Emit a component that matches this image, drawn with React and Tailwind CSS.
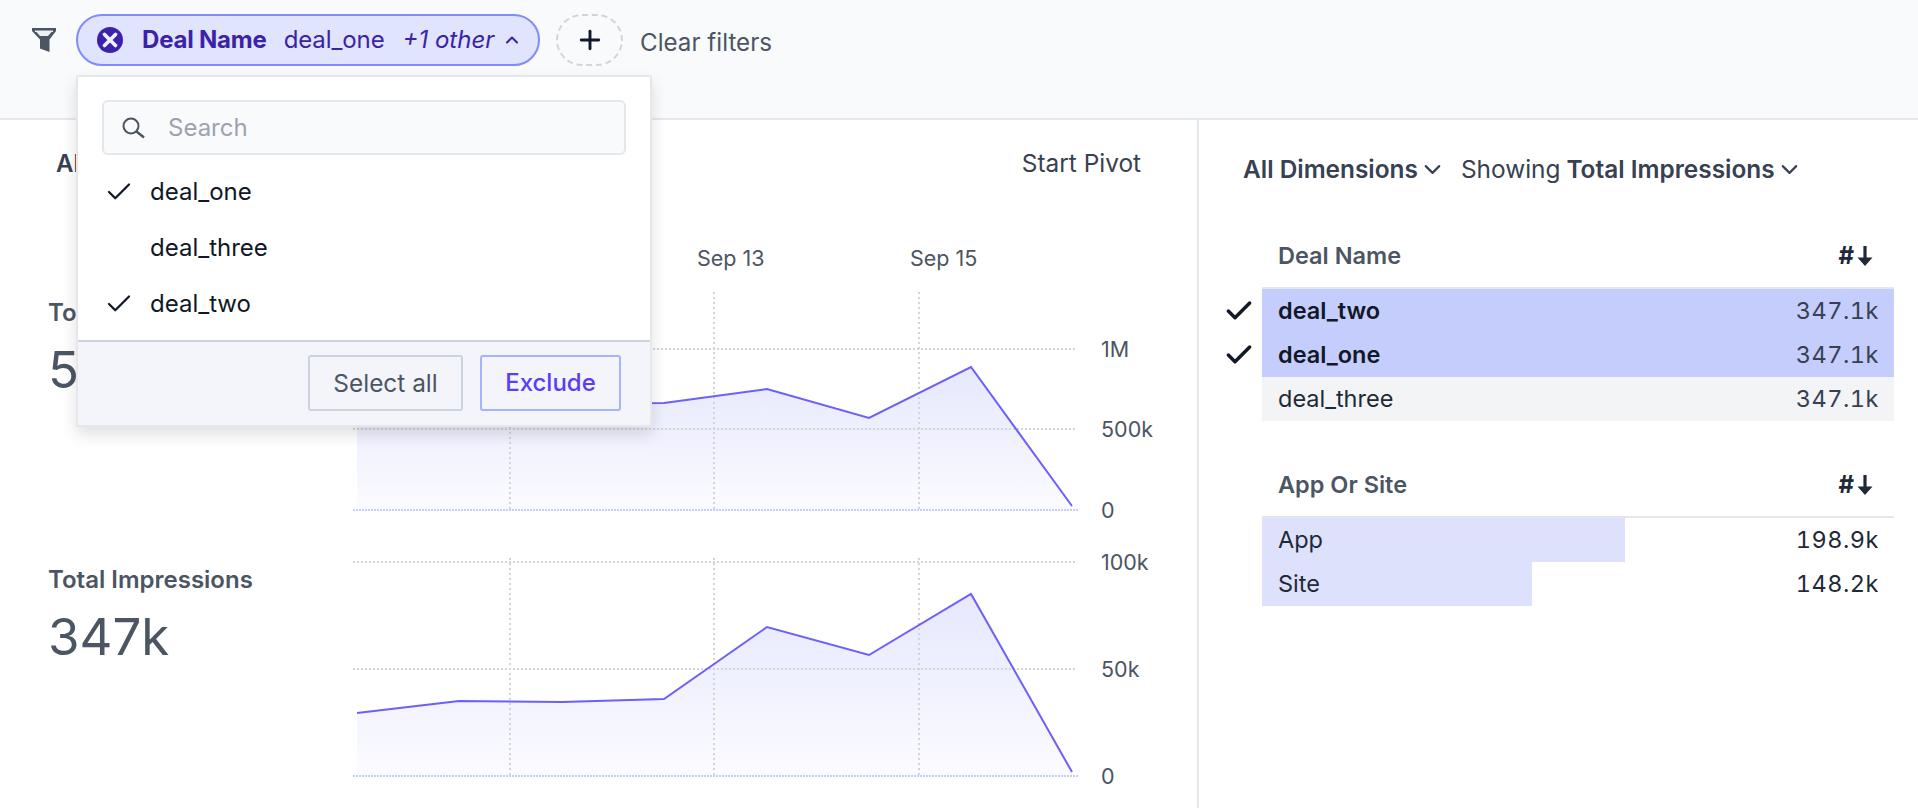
import React from 'react';
import { Check, ChevronDown, ChevronUp, Plus, X } from 'lucide-react';

const xs = [357, 459, 562, 664, 767, 869, 971, 1072];

const charts = [
  {
    label: 'Total Requests',
    value: '552k',
    top: 207,
    height: 320,
    ys: [410, 404, 404, 403, 389, 418, 367, 506],
    gridTop: 292,
    lines: [349, 429],
    base: 510,
    ticks: [['1M', 349], ['500k', 429], ['0', 510]],
    dates: true,
  },
  {
    label: 'Total Impressions',
    value: '347k',
    top: 527,
    height: 270,
    ys: [713, 701, 702, 699, 627, 655, 594, 772],
    gridTop: 558,
    lines: [562, 669],
    base: 776,
    ticks: [['100k', 562], ['50k', 669], ['0', 776]],
  },
];

const dealRows = [
  { name: 'deal_two', value: '347.1k', selected: true },
  { name: 'deal_one', value: '347.1k', selected: true },
  { name: 'deal_three', value: '347.1k' },
];

const appRows = [
  { name: 'App', value: '198.9k', width: 363 },
  { name: 'Site', value: '148.2k', width: 270 },
];

const FunnelIcon = () => (
  <svg width="24" height="24" viewBox="0 0 24 24" className="shrink-0">
    <path d="M0 0H24V3L17.5 11.5V24L8 20.5V11.5L0 3Z" fill="#4b5563" />
    <path d="M3 2.5H21V4H19.5L16 8H8L4.5 4H3Z" fill="#eef0f4" />
  </svg>
);

const SearchIcon = () => (
  <svg width="24" height="24" viewBox="0 0 24 24" className="shrink-0" fill="none" stroke="#4b5563" strokeWidth="2">
    <circle cx="9" cy="10" r="7.5" />
    <path d="M14.5 15.5L22 21.5" strokeWidth="2.4" />
  </svg>
);

const SortArrow = () => (
  <svg width="16" height="22" viewBox="0 0 16 22">
    <path d="M8 1V14" stroke="#1f2937" strokeWidth="3.2" />
    <path d="M0.5 12.5H15.5L8 21Z" fill="#1f2937" />
  </svg>
);

const Chart = ({ chart }) => {
  const line = chart.ys.map((y, i) => `${xs[i]},${y}`).join(' ');
  const id = `fill-${chart.top}`;
  return (
    <div className="flex" style={{ height: chart.height }}>
      <div className={`w-[353px] shrink-0 pl-[48px] ${chart.dates ? 'pt-[92px]' : 'pt-[39px]'}`}>
        <div className="text-[24px] leading-[28px] font-semibold text-[#4b5563]">{chart.label}</div>
        <div className="mt-[13px] text-[51px] leading-[60px] text-[#4b5563]">{chart.value}</div>
      </div>
      <svg width="844" height={chart.height} viewBox={`353 ${chart.top} 844 ${chart.height}`} className="block">
        <defs>
          <linearGradient id={id} x1="0" y1="0" x2="0" y2="1">
            <stop offset="0" stopColor="#e6e8fd" />
            <stop offset="1" stopColor="#fbfbff" />
          </linearGradient>
        </defs>
        <polygon points={`357,${chart.base} ${line} 1072,${chart.base}`} fill={`url(#${id})`} />
        {[510, 714, 919].map(x => (
          <line key={x} x1={x} x2={x} y1={chart.gridTop} y2={chart.base} stroke="#d1d5db" strokeWidth="2" strokeDasharray="2 3" />
        ))}
        {chart.lines.map(y => (
          <line key={y} x1="353" x2="1076" y1={y} y2={y} stroke="#d1d5db" strokeWidth="2" strokeDasharray="2 2" />
        ))}
        <line x1="353" x2="1078" y1={chart.base} y2={chart.base} stroke="#c7cdfa" strokeWidth="2" strokeDasharray="2 1" />
        <polyline points={line} fill="none" stroke="#6c5ffb" strokeWidth="2" />
        {chart.ticks.map(([t, y]) => (
          <text key={t} x="1101" y={y + 8} fontSize="21.5" fill="#4b5563">{t}</text>
        ))}
        {chart.dates && (
          <>
            <text x="697" y="266" fontSize="21.5" fill="#4b5563">Sep 13</text>
            <text x="910" y="266" fontSize="21.5" fill="#4b5563">Sep 15</text>
          </>
        )}
      </svg>
    </div>
  );
};

const LeaderTable = ({ title, children, className }) => (
  <div className={className}>
    <div className="ml-[63px] mr-[24px] flex h-[64px] items-center justify-between pl-[16px] pr-[21px] border-b-2 border-[#e5e7f0]">
      <span className="text-[23.5px] font-semibold text-[#4b5563]">{title}</span>
      <span className="flex items-center gap-[3px] text-[24px] font-bold text-[#1f2937]">
        #<SortArrow />
      </span>
    </div>
    {children}
  </div>
);

export default function App() {
  return (
    <div className="relative h-[808px] w-[1918px] overflow-hidden bg-white font-['Inter',sans-serif]">
      {/* filter bar */}
      <div className="flex h-[120px] items-start border-b-2 border-[#e5e7eb] bg-[#f9fafb] pl-[32px] pt-[14px]">
        <div className="mr-[20px] flex h-[52px] w-[24px] items-center">
          <FunnelIcon />
        </div>
        <div className="flex h-[52px] w-[464px] items-center rounded-full border-2 border-[#818cf8] bg-[#e0e4fd] pl-[19px] text-[24px] text-[#3b22a8]">
          <span className="flex h-[26px] w-[26px] items-center justify-center rounded-full bg-[#3b22a8]">
            <X size={22} strokeWidth={4} className="text-[#eef0ff]" />
          </span>
          <span className="ml-[19px] font-bold tracking-[-0.2px]">Deal Name</span>
          <span className="ml-[17px] tracking-[-0.1px]">deal_one</span>
          <span className="ml-[18px] italic">+1 other</span>
          <ChevronUp size={20} strokeWidth={2.5} className="ml-[8px]" />
        </div>
        <div className="ml-[16px] flex h-[52px] w-[67px] items-center justify-center rounded-full border-2 border-dashed border-[#d1d5db]">
          <Plus size={30} strokeWidth={2.3} className="text-[#111827]" />
        </div>
        <span className="ml-[17px] leading-[58px] text-[24.2px] text-[#4b5563]">Clear filters</span>
      </div>

      <div className="flex">
        {/* charts */}
        <div className="w-[1197px] shrink-0">
          <div className="flex h-[87px] items-center justify-between pl-[56px] pr-[56px]">
            <span className="text-[24px] font-semibold text-[#374151]">All Measures</span>
            <span className="text-[24.4px] text-[#374151]">Start Pivot</span>
          </div>
          {charts.map(c => (
            <Chart key={c.label} chart={c} />
          ))}
        </div>

        {/* dimensions */}
        <div className="min-h-[688px] flex-1 border-l-2 border-[#e5e7eb]">
          <div className="flex h-[98px] items-center pl-[44px] text-[24.4px] text-[#374151]">
            <span className="font-semibold">All Dimensions</span>
            <ChevronDown size={27} strokeWidth={1.9} className="ml-[1px]" />
            <span className="ml-[15px]">Showing</span>
            <span className="ml-[6px] font-semibold">Total Impressions</span>
            <ChevronDown size={27} strokeWidth={1.9} className="ml-[1px]" />
          </div>
          <LeaderTable title="Deal Name" className="mt-[7px]">
            {dealRows.map(r => (
              <div key={r.name} className="flex h-[44px] items-center">
                <div className="flex w-[63px] justify-end pr-[7px]">
                  {r.selected && <Check size={32} strokeWidth={2.6} className="text-[#111827]" />}
                </div>
                <div className={`mr-[24px] flex h-full flex-1 items-center justify-between pl-[16px] pr-[15px] text-[23.5px] ${r.selected ? 'bg-[#c4cdfc] font-semibold text-[#111827]' : 'bg-[#f3f4f6] text-[#1f2937]'}`}>
                  <span>{r.name}</span>
                  <span className="font-normal tabular-nums tracking-[0.5px] text-[#374151]">{r.value}</span>
                </div>
              </div>
            ))}
          </LeaderTable>
          <LeaderTable title="App Or Site" className="mt-[33px]">
            {appRows.map(r => (
              <div key={r.name} className="ml-[63px] mr-[24px] flex h-[44px] items-center">
                <div className="flex h-full items-center bg-[#dee1fc] pl-[16px] text-[23.5px] text-[#1f2937]" style={{ width: r.width }}>
                  {r.name}
                </div>
                <span className="ml-auto pr-[15px] text-[23.5px] tabular-nums tracking-[0.5px] text-[#1f2937]">{r.value}</span>
              </div>
            ))}
          </LeaderTable>
        </div>
      </div>

      {/* filter dropdown */}
      <div className="absolute left-[76px] top-[75px] w-[576px] rounded-[2px] border-2 border-[#e5e7eb] bg-white shadow-[0_8px_16px_rgba(0,0,0,0.12)]">
        <div className="px-[24px] pt-[23px] pb-[9px]">
          <div className="flex h-[55px] items-center rounded-[6px] border-2 border-[#e5e7eb] bg-[#f9fafb] pl-[18px] text-[24px] text-[#9ca3af]">
            <SearchIcon />
            <span className="ml-[22px]">Search</span>
          </div>
        </div>
        {['deal_one', 'deal_three', 'deal_two'].map(name => (
          <div key={name} className="flex h-[56px] items-center text-[24px] text-[#111827]">
            <div className="flex w-[72px] justify-end pr-[16px]">
              {name !== 'deal_three' && <Check size={30} strokeWidth={1.8} className="text-[#111827]" />}
            </div>
            {name}
          </div>
        ))}
        <div className="mt-[8px] flex h-[85px] items-start justify-end gap-[17px] border-t-2 border-[#cbd2e1] bg-[#f3f5fa] pr-[29px] pt-[13px]">
          <button className="h-[56px] w-[155px] rounded-[3px] border-2 border-[#cbd2e1] text-[24.4px] text-[#4b5563]">Select all</button>
          <button className="h-[56px] w-[141px] rounded-[3px] border-2 border-[#a5b4fc] text-[24px] font-medium text-[#5b3df5]">Exclude</button>
        </div>
      </div>
    </div>
  );
}
